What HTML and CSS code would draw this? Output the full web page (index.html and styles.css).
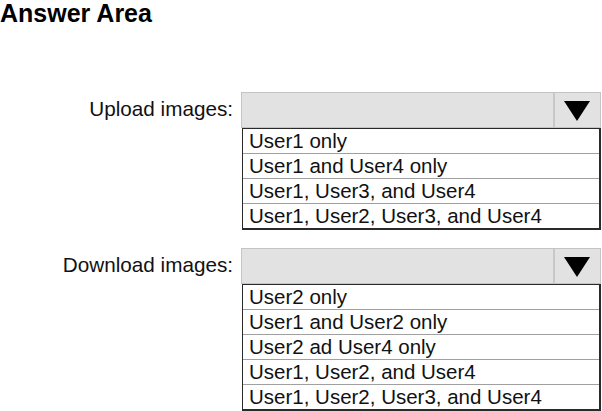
FILE: index.html
```html
<!DOCTYPE html>
<html>
<head>
<meta charset="utf-8">
<link rel="stylesheet" href="styles.css">
</head>
<body>
<h1 class="title">Answer Area</h1>
<div class="form">
  <div class="row">
    <div class="label">Upload images:</div>
    <div class="field">
      <div class="select">
        <div class="select-value"></div>
        <div class="select-arrow"><svg width="26" height="20" viewBox="0 0 26 20"><polygon points="0,0 26,0 13,20" fill="#000"/></svg></div>
      </div>
      <ul class="options">
        <li>User1 only</li>
        <li>User1 and User4 only</li>
        <li>User1, User3, and User4</li>
        <li>User1, User2, User3, and User4</li>
      </ul>
    </div>
  </div>
  <div class="row">
    <div class="label">Download images:</div>
    <div class="field">
      <div class="select">
        <div class="select-value"></div>
        <div class="select-arrow"><svg width="26" height="20" viewBox="0 0 26 20"><polygon points="0,0 26,0 13,20" fill="#000"/></svg></div>
      </div>
      <ul class="options">
        <li>User2 only</li>
        <li>User1 and User2 only</li>
        <li>User2 ad User4 only</li>
        <li>User1, User2, and User4</li>
        <li>User1, User2, User3, and User4</li>
      </ul>
    </div>
  </div>
</div>
</body>
</html>
```
FILE: styles.css
```css
html, body {
  margin: 0;
  padding: 0;
  background: #fff;
}
body {
  font-family: "Liberation Sans", Arial, sans-serif;
  color: #111;
  width: 602px;
  height: 411px;
  overflow: hidden;
}
.title {
  margin: 0;
  padding-top: 1px;
  font-size: 25px;
  line-height: 24px;
  font-weight: bold;
  color: #000;
}
.form {
  padding-top: 67px;
  display: flex;
  flex-direction: column;
  gap: 18px;
}
.row {
  display: flex;
  align-items: flex-start;
}
.label {
  width: 233px;
  height: 36px;
  box-sizing: border-box;
  display: flex;
  align-items: center;
  justify-content: flex-end;
  font-size: 20.7px;
  line-height: 23px;
  padding-bottom: 3px;
}
.field {
  margin-left: 8px;
  width: 360px;
}
.select {
  height: 36px;
  box-sizing: border-box;
  border: 1px solid #c4c4c4;
  background: #e2e2e2;
  display: flex;
}
.select-value {
  flex: 1;
}
.select-arrow {
  width: 47px;
  border-left: 2px solid #c8c8c8;
  display: flex;
  align-items: center;
  justify-content: center;
  padding-top: 2px;
  padding-right: 2px;
  box-sizing: border-box;
}
.select-arrow svg {
  display: block;
}
.options {
  list-style: none;
  margin: 0 0 0 1px;
  padding: 0;
  border: 1.5px solid #2a2a2a;
  border-right-width: 2px;
  border-bottom-width: 2px;
}
.options li {
  height: 24px;
  line-height: 24px;
  font-size: 20.5px;
  padding-left: 6px;
  border-top: 1px solid #a0a0a0;
  white-space: nowrap;
}
.options li:first-child {
  border-top: none;
}
```
